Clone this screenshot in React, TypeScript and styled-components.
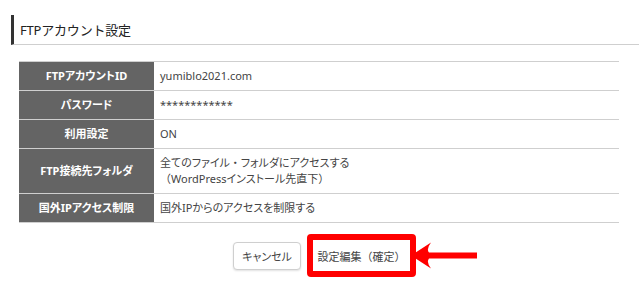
import React from 'react';
import styled, { createGlobalStyle } from 'styled-components';

const GlobalStyle = createGlobalStyle`
  html, body {
    margin: 0;
    padding: 0;
    background: #fff;
  }
  body {
    font-family: 'Noto Sans', 'Noto Sans CJK JP', sans-serif;
    color: #333;
  }
`;

const Page = styled.div`
  width: 639px;
  padding: 15px 0 0 11px;
  box-sizing: border-box;
`;

const Heading = styled.h2`
  margin: 0;
  height: 30px;
  box-sizing: border-box;
  display: flex;
  align-items: center;
  padding-left: 6px;
  border-left: 3px solid #333;
  border-bottom: 1px solid #cfcfcf;
  font-size: 13px;
  font-weight: normal;
  color: #222;
  letter-spacing: -0.2px;
`;

const Table = styled.table`
  width: 600px;
  margin: 16px 0 0 8px;
  border-collapse: collapse;
  font-size: 11px;
  line-height: 16px;
  border-top: 1px solid #cfcfcf;
`;

const Row = styled.tr`
  border-bottom: 1px solid #cfcfcf;
`;

const Label = styled.th`
  width: 135px;
  padding: 6px 4px;
  box-sizing: border-box;
  background: #646464;
  color: #fff;
  font-weight: bold;
  text-align: center;
  font-feature-settings: 'palt';
`;

const Value = styled.td`
  padding: 6px 6px;
  color: #444;
  text-align: left;
  font-feature-settings: 'palt';
`;

// full-width punctuation keeps its full em box, as in the original page font
const Punct = styled.span`
  font-feature-settings: normal;
`;

const Actions = styled.div`
  display: flex;
  justify-content: center;
  align-items: center;
  gap: 6px;
  width: 600px;
  box-sizing: border-box;
  margin: 11px 0 0 8px;
  padding-left: 11px;
`;

const Button = styled.button<{ $wide?: boolean }>`
  width: ${(p) => (p.$wide ? '97px' : '68px')};
  height: ${(p) => (p.$wide ? '31px' : '28px')};
  padding: 0;
  font-family: inherit;
  font-size: 11px;
  color: #444;
  background: #fff;
  border: ${(p) => (p.$wide ? 'none' : '1px solid #cfcfcf')};
  border-radius: 4px;
  box-shadow: ${(p) => (p.$wide ? 'none' : '0 1px 2px rgba(0, 0, 0, 0.12)')};
  font-feature-settings: 'palt';
  cursor: pointer;
`;

const Highlight = styled.div`
  position: relative;
  display: flex;
  border: 6px solid #f00;
  border-radius: 4px;
`;

const Arrow = styled.svg`
  position: absolute;
  left: calc(100% + 1px);
  top: 2px;
`;

const rows: { label: string; value: React.ReactNode }[] = [
  { label: 'FTPアカウントID', value: 'yumiblo2021.com' },
  { label: 'パスワード', value: '************' },
  { label: '利用設定', value: 'ON' },
  {
    label: 'FTP接続先フォルダ',
    value: (
      <>
        全てのファイル<Punct>・</Punct>フォルダにアクセスする
        <br />
        <Punct>（</Punct>WordPressインストール先直下<Punct>）</Punct>
      </>
    ),
  },
  { label: '国外IPアクセス制限', value: '国外IPからのアクセスを制限する' },
];

export default function App() {
  return (
    <Page>
      <GlobalStyle />
      <Heading>FTPアカウント設定</Heading>
      <Table>
        <tbody>
          {rows.map((r) => (
            <Row key={r.label}>
              <Label>{r.label}</Label>
              <Value>{r.value}</Value>
            </Row>
          ))}
        </tbody>
      </Table>
      <Actions>
        <Button>キャンセル</Button>
        <Highlight>
          <Button $wide>
            設定編集<Punct>（</Punct>確定<Punct>）</Punct>
          </Button>
          <Arrow width='66' height='27' viewBox='0 0 66 27'>
            <path
              d='M0 13.5 L20 0.5 Q15 7 18 10.5 L66 10.5 L66 16.5 L18 16.5 Q15 20 20 26.5 Z'
              fill='#f00'
            />
          </Arrow>
        </Highlight>
      </Actions>
    </Page>
  );
}
